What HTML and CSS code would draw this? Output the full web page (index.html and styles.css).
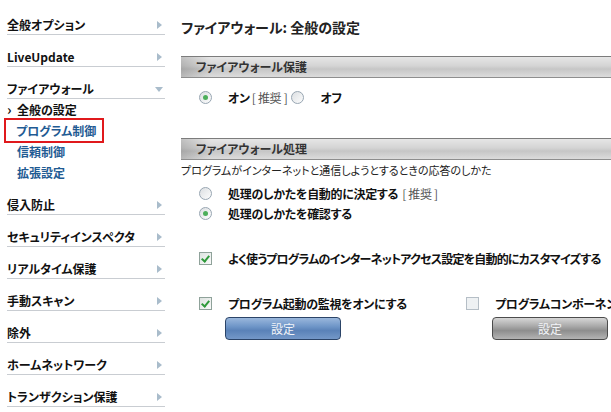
FILE: index.html
```html
<!DOCTYPE html>
<html lang="ja">
<head>
  <meta charset="UTF-8">
  <title>ファイアウォール: 全般の設定</title>
  <link rel="stylesheet" href="styles.css">
</head>
<body>
  <!-- Left navigation -->
  <nav class="sidebar">
    <div class="nav-item"><span>全般オプション</span><span class="arrow"></span></div>
    <div class="nav-item"><span>LiveUpdate</span><span class="arrow"></span></div>
    <div class="nav-item"><span>ファイアウォール</span><span class="arrow down"></span></div>
    <div class="sub-list">
      <div class="sub-item active"><span class="chev">&#x203A;</span>全般の設定</div>
      <div class="sub-item current">プログラム制御</div>
      <div class="sub-item">信頼制御</div>
      <div class="sub-item">拡張設定</div>
    </div>
    <div class="nav-item"><span>侵入防止</span><span class="arrow"></span></div>
    <div class="nav-item"><span>セキュリティインスペクタ</span><span class="arrow"></span></div>
    <div class="nav-item"><span>リアルタイム保護</span><span class="arrow"></span></div>
    <div class="nav-item"><span>手動スキャン</span><span class="arrow"></span></div>
    <div class="nav-item"><span>除外</span><span class="arrow"></span></div>
    <div class="nav-item"><span>ホームネットワーク</span><span class="arrow"></span></div>
    <div class="nav-item"><span>トランザクション保護</span><span class="arrow"></span></div>
  </nav>

  <!-- Main settings -->
  <main class="content">
    <h1 class="title">ファイアウォール: 全般の設定</h1>

    <div class="bar">ファイアウォール保護</div>
    <div class="row inline">
      <span class="radio on"></span><b>オン</b><span class="note tight">[ 推奨 ]</span>
      <span class="radio"></span><b>オフ</b>
    </div>

    <div class="bar second">ファイアウォール処理</div>
    <div class="desc">プログラムがインターネットと通信しようとするときの応答のしかた</div>
    <div class="row first-radio"><span class="radio"></span><b>処理のしかたを自動的に決定する</b><span class="note">[ 推奨 ]</span></div>
    <div class="row"><span class="radio on"></span><b>処理のしかたを確認する</b></div>

    <div class="row gap"><span class="check on"></span><b class="long">よく使うプログラムのインターネットアクセス設定を自動的にカスタマイズする</b></div>

    <div class="cols">
      <div class="col">
        <div class="row"><span class="check on"></span><b>プログラム起動の監視をオンにする</b></div>
        <button class="btn blue">設定</button>
      </div>
      <div class="col">
        <div class="row"><span class="check"></span><b>プログラムコンポーネント</b></div>
        <button class="btn gray">設定</button>
      </div>
    </div>
  </main>
</body>
</html>
```

FILE: styles.css
```css
body {
  margin: 0;
  width: 611px;
  height: 412px;
  overflow: hidden;
  display: flex;
  background: #fff;
  color: #111;
  font-family: "Noto Sans CJK JP", "Liberation Sans", sans-serif;
  font-size: 12px;
  font-feature-settings: "palt";
}
/* Sidebar */
.sidebar {
  width: 158px;
  padding: 3px 0 0 7px;
  flex-shrink: 0;
}
.nav-item {
  height: 32px;
  box-sizing: border-box;
  border-bottom: 1px solid #c9cdd2;
  display: flex;
  align-items: flex-end;
  justify-content: space-between;
  padding-bottom: 1px;
  font-weight: bold;
  line-height: 16px;
}
.arrow {
  width: 0;
  height: 0;
  border-top: 4px solid transparent;
  border-bottom: 4px solid transparent;
  border-left: 5px solid #a9bccb;
  margin: 0 3px 4px 0;
}
.arrow.down {
  border-left: 4px solid transparent;
  border-right: 4px solid transparent;
  border-top: 5px solid #a9bccb;
  border-bottom: 0;
  margin: 0 2px 5px 0;
}
.sub-item {
  height: 21px;
  line-height: 21px;
  padding-left: 10px;
  font-weight: bold;
  color: #1f5b93;
}
.sub-item.active {
  color: #111;
  padding-left: 0;
}
.chev {
  display: inline-block;
  width: 10px;
  font-size: 14px;
}
.sub-item.current {
  width: 86px;
  margin-left: -1px;
  outline: 2px solid #e0191c;
}
/* Main */
.content {
  flex: 1;
  margin-left: 16px;
  min-width: 0;
}
.title {
  margin: 19px 0 0;
  font-size: 14px;
  line-height: 17px;
  font-weight: bold;
  color: #222;
}
.bar {
  margin-top: 20px;
  height: 22px;
  box-sizing: border-box;
  border-top: 1px solid #7c7c7c;
  border-bottom: 1px solid #8e8e8e;
  background:
    linear-gradient(to right, rgba(0, 0, 0, 0.16), rgba(0, 0, 0, 0) 30px),
    linear-gradient(#e6e6e6, #d4d4d4 45%, #c6c6c6 60%, #dcdcdc);
  padding-left: 15px;
  line-height: 20px;
  font-weight: bold;
  color: #333;
}
.bar.second {
  margin-top: 31px;
}
.row {
  display: flex;
  align-items: center;
  height: 20px;
  padding-left: 18px;
  white-space: nowrap;
}
.row b {
  font-weight: bold;
  letter-spacing: -0.3px;
}
.row b.long {
  letter-spacing: -0.8px;
}
.inline {
  margin-top: 9px;
}
.note {
  color: #555;
  margin: 0 6px 0 4px;
  letter-spacing: -0.3px;
}
.note.tight {
  margin: 0 4px 0 2px;
}
.desc {
  height: 20px;
  line-height: 20px;
  font-size: 11px;
  color: #222;
  white-space: nowrap;
}
.first-radio {
  margin-top: 3px;
}
.gap {
  margin-top: 25px;
}
.radio {
  width: 11px;
  height: 11px;
  border: 1px solid #98a6b2;
  border-radius: 50%;
  background: linear-gradient(135deg, #dcdfe2, #fdfdfd);
  margin-right: 16px;
  position: relative;
  flex-shrink: 0;
}
.radio.on::after {
  content: "";
  position: absolute;
  left: 3px;
  top: 3px;
  width: 5px;
  height: 5px;
  border-radius: 50%;
  background: #4cae5a;
}
.check {
  width: 11px;
  height: 11px;
  border: 1px solid #8fa29a;
  background: linear-gradient(135deg, #dde3e0, #fafafa);
  margin-right: 16px;
  position: relative;
  flex-shrink: 0;
}
.check.on::after {
  content: "";
  position: absolute;
  left: 3px;
  top: 1px;
  width: 3px;
  height: 6px;
  border-right: 2px solid #2f9a3b;
  border-bottom: 2px solid #2f9a3b;
  transform: rotate(40deg);
}
.check:not(.on) {
  border-color: #b5bec6;
  background: #eef1f3;
}
.cols {
  display: grid;
  grid-template-columns: 267px 150px;
  margin-top: 25px;
}
.btn {
  display: block;
  margin: 4px 0 0 44px;
  width: 116px;
  height: 23px;
  border-radius: 4px;
  font-family: inherit;
  font-size: 12px;
  padding: 0;
  color: #f2f4f8;
}
.btn.blue {
  border: 1px solid #2b4468;
  background: linear-gradient(#9ab7dc, #6f96c8 40%, #5a82b8 60%, #7498c8);
}
.btn.gray {
  border: 1px solid #4c4c4c;
  background: linear-gradient(#d6d6d6, #a8a8a8 40%, #8e8e8e 60%, #b4b4b4);
}
```
